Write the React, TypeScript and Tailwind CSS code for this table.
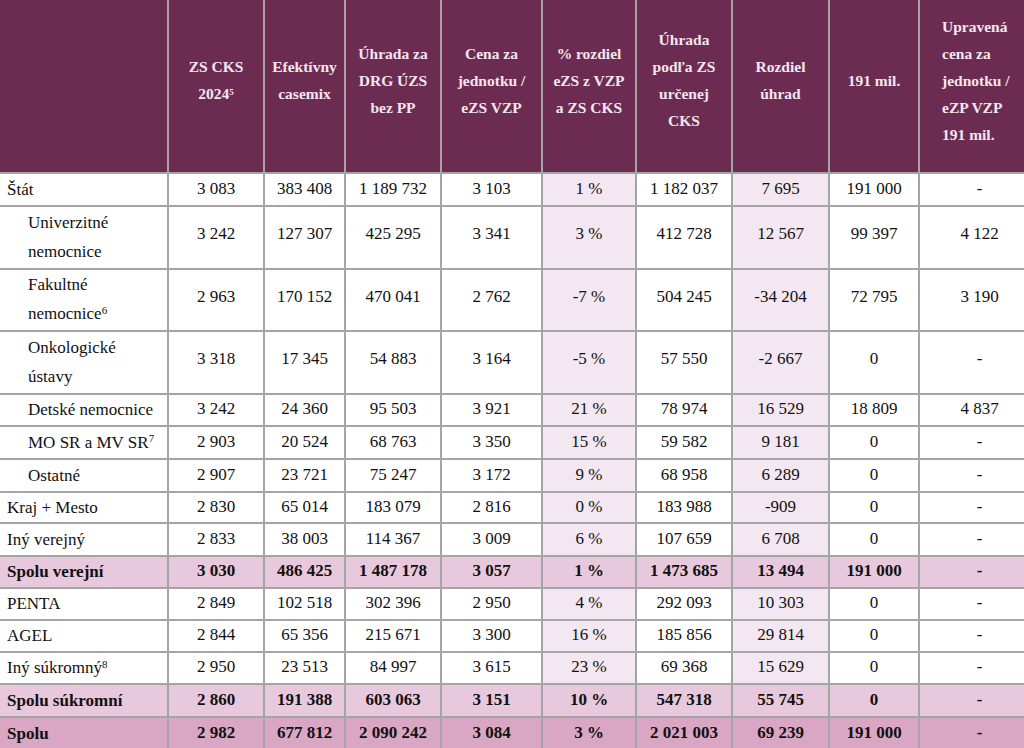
import React from "react";

type Row = {
  label: React.ReactNode;
  cells: string[];
  indent?: boolean;
  h: number;
  kind?: "sub" | "total";
};

const HEAD: React.ReactNode[] = [
  "",
  <>ZS CKS<br />2024<sup className="text-[9px]">5</sup></>,
  <>Efektívny<br />casemix</>,
  <>Úhrada za<br />DRG ÚZS<br />bez PP</>,
  <>Cena za<br />jednotku /<br />eZS VZP</>,
  <>% rozdiel<br />eZS z VZP<br />a ZS CKS</>,
  <>Úhrada<br />podľa ZS<br />určenej<br />CKS</>,
  <>Rozdiel<br />úhrad</>,
  <>191 mil.</>,
  <>Upravená<br />cena za<br />jednotku /<br />eZP VZP<br />191 mil.</>,
];

const WIDTHS = [168, 96, 81, 96, 101, 94, 96, 97, 90, 121];

const sup = (n: string) => <sup className="text-[11px]">{n}</sup>;

const ROWS: Row[] = [
  { label: "Štát", h: 33, cells: ["3 083", "383 408", "1 189 732", "3 103", "1 %", "1 182 037", "7 695", "191 000", "-"] },
  { label: <>Univerzitné<br />nemocnice</>, indent: true, h: 63, cells: ["3 242", "127 307", "425 295", "3 341", "3 %", "412 728", "12 567", "99 397", "4 122"] },
  { label: <>Fakultné<br />nemocnice{sup("6")}</>, indent: true, h: 62, cells: ["2 963", "170 152", "470 041", "2 762", "-7 %", "504 245", "-34 204", "72 795", "3 190"] },
  { label: <>Onkologické<br />ústavy</>, indent: true, h: 63, cells: ["3 318", "17 345", "54 883", "3 164", "-5 %", "57 550", "-2 667", "0", "-"] },
  { label: "Detské nemocnice", indent: true, h: 32, cells: ["3 242", "24 360", "95 503", "3 921", "21 %", "78 974", "16 529", "18 809", "4 837"] },
  { label: <>MO SR a MV SR{sup("7")}</>, indent: true, h: 33, cells: ["2 903", "20 524", "68 763", "3 350", "15 %", "59 582", "9 181", "0", "-"] },
  { label: "Ostatné", indent: true, h: 33, cells: ["2 907", "23 721", "75 247", "3 172", "9 %", "68 958", "6 289", "0", "-"] },
  { label: "Kraj + Mesto", h: 31, cells: ["2 830", "65 014", "183 079", "2 816", "0 %", "183 988", "-909", "0", "-"] },
  { label: "Iný verejný", h: 33, cells: ["2 833", "38 003", "114 367", "3 009", "6 %", "107 659", "6 708", "0", "-"] },
  { label: "Spolu verejní", kind: "sub", h: 32, cells: ["3 030", "486 425", "1 487 178", "3 057", "1 %", "1 473 685", "13 494", "191 000", "-"] },
  { label: "PENTA", h: 32, cells: ["2 849", "102 518", "302 396", "2 950", "4 %", "292 093", "10 303", "0", "-"] },
  { label: "AGEL", h: 32, cells: ["2 844", "65 356", "215 671", "3 300", "16 %", "185 856", "29 814", "0", "-"] },
  { label: <>Iný súkromný{sup("8")}</>, h: 32, cells: ["2 950", "23 513", "84 997", "3 615", "23 %", "69 368", "15 629", "0", "-"] },
  { label: "Spolu súkromní", kind: "sub", h: 33, cells: ["2 860", "191 388", "603 063", "3 151", "10 %", "547 318", "55 745", "0", "-"] },
  { label: "Spolu", kind: "total", h: 33, cells: ["2 982", "677 812", "2 090 242", "3 084", "3 %", "2 021 003", "69 239", "191 000", "-"] },
];

export default function App() {
  return (
    <div className="w-[1024px] h-[748px] overflow-hidden bg-white text-[#111] font-['Liberation_Serif','Times_New_Roman',serif]">
      <table className="table-fixed border-collapse w-[1040px] font-['Liberation_Serif','Times_New_Roman',serif]">
        <colgroup>
          {WIDTHS.map((w, i) => (
            <col key={i} style={{ width: w }} />
          ))}
        </colgroup>
        <thead>
          <tr className="h-[173px] bg-[#6c2c52]">
            {HEAD.map((h, i) => (
              <th
                key={i}
                className={`border-2 border-t-0 border-[#a5a5a5] ${i === 0 ? "border-l-0" : ""} ${
                  i === 9 ? "text-left pl-[22px]" : "text-center"
                } align-middle p-0 pb-[12px] text-[15.5px] leading-[27px] font-bold text-[#f4e6ee]`}
              >
                {h}
              </th>
            ))}
          </tr>
        </thead>
        <tbody>
          {ROWS.map((r, ri) => {
            const rowBg =
              r.kind === "total" ? "bg-[#d9a6c3]" : r.kind === "sub" ? "bg-[#e8c8dc]" : "bg-white";
            const bold = r.kind ? "font-bold" : "";
            const tall = r.h > 40;
            return (
              <tr key={ri} className={rowBg} style={{ height: r.h }}>
                <td
                  className={`border-2 border-l-0 border-[#a5a5a5] align-middle p-0 text-[17px] ${
                    tall ? "leading-[29px] pb-[2px]" : "leading-[24px]"
                  } ${bold} ${r.indent ? "pl-[28px]" : "pl-[7px]"}`}
                >
                  {r.label}
                </td>
                {r.cells.map((c, ci) => {
                  const tint = !r.kind && (ci === 4 || ci === 6) ? "bg-[#f3e7f1]" : "";
                  return (
                    <td
                      key={ci}
                      className={`border-2 border-[#a5a5a5] text-center align-middle p-0 text-[17px] leading-[24px] ${
                        tall ? "pb-[7px]" : "pb-[2px]"
                      } ${bold} ${tint}`}
                    >
                      {c}
                    </td>
                  );
                })}
              </tr>
            );
          })}
        </tbody>
      </table>
    </div>
  );
}
